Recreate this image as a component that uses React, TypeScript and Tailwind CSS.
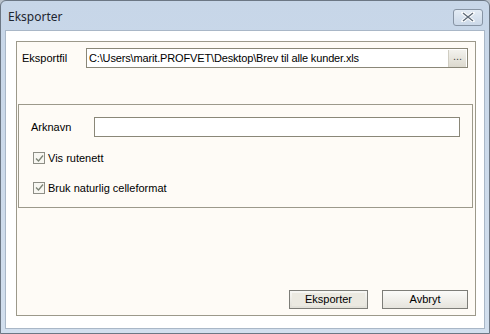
import { ReactNode } from 'react';

function CheckBox({ label }: { label: string }) {
  return (
    <label className="flex items-center gap-[3px]">
      <span className="flex h-[12px] w-[12px] items-center justify-center border border-[#8e8e86] bg-[#f7f6f1]">
        <svg width="9" height="9" viewBox="0 0 9 9">
          <path d="M1 4.5 L3.5 7 L8 1.5" fill="none" stroke="#7b8274" strokeWidth="1.3" />
        </svg>
      </span>
      <span>{label}</span>
    </label>
  );
}

function Button({ children, focused }: { children: ReactNode; focused?: boolean }) {
  return (
    <button
      className={
        focused
          ? 'h-[19px] w-[79px] border border-[#7d7d78] bg-gradient-to-b from-[#f7f7f4] to-[#e2e0d8] p-[2px]'
          : 'h-[19px] w-[86px] border border-[#7d7d78] bg-gradient-to-b from-[#fbfbf9] to-[#e6e4dd]'
      }
    >
      {focused ? (
        <span className="flex h-full w-full items-center justify-center bg-[#ebe9e1]">{children}</span>
      ) : (
        children
      )}
    </button>
  );
}

export default function App() {
  return (
    <div
      className="h-[334px] w-[490px] bg-[#b9c2cc] text-[11px] text-black"
      style={{ fontFamily: '"Liberation Sans", Arial, sans-serif' }}
    >
      <div className="flex h-full flex-col rounded-t-[6px] border border-[#6c7784] bg-gradient-to-b from-[#c7d6e8] to-[#d2dfee]">
        {/* Title bar */}
        <div className="flex h-[29px] items-center justify-between pl-[7px] pr-[6px]">
          <span className="mt-[3px] text-[12px] text-[#1e2630]" style={{ fontFamily: '"Noto Sans", sans-serif' }}>
            Eksporter
          </span>
          <div className="mt-[3px] flex h-[17px] w-[30px] items-center justify-center rounded-[3px] border border-[#8794a4] bg-gradient-to-b from-[#e4ecf5] to-[#cbd8e8]">
            <svg width="14" height="10" viewBox="0 0 14 10">
              <path d="M2 1 L12 9 M12 1 L2 9" stroke="#fff" strokeWidth="3.4" strokeLinecap="round" />
              <path d="M2 1 L12 9 M12 1 L2 9" stroke="#5e6a78" strokeWidth="1.4" />
            </svg>
          </div>
        </div>

        {/* Client area */}
        <div className="mx-[4px] mb-[4px] flex-1 border border-[#a9b7c7] bg-white px-[10px] pt-[10px] pb-[12px]">
          <div className="flex h-[275px] w-[460px] flex-col border border-[#9c998b] bg-[#fefbf6] pl-[5px] pr-[7px] pb-[6px]">
            {/* Export file row */}
            <div className="mt-[6px] flex items-center">
              <span className="w-[64px]">Eksportfil</span>
              <div className="flex h-[20px] w-[382px] items-center border border-[#8a8778] bg-white">
                <span className="flex-1 pl-[2px] tracking-[-0.15px]">
                  C:\Users\marit.PROFVET\Desktop\Brev til alle kunder.xls
                </span>
                <div className="mr-[1px] flex h-[17px] w-[18px] items-center justify-center border-l border-[#d0cdc2] bg-gradient-to-b from-[#f3f2ee] to-[#dcd9ce] pb-[3px] text-[#4b4b4b]">
                  ...
                </div>
              </div>
            </div>

            {/* Group box */}
            <div className="-ml-[4px] mt-[36px] h-[104px] w-[455px] border border-[#9c998b] pl-[12px] pr-[12px] pt-[12px]">
              <div className="flex items-center">
                <span className="w-[63px]">Arknavn</span>
                <div className="h-[20px] w-[366px] border border-[#8a8778] bg-white" />
              </div>
              <div className="mt-[13px] ml-[2px] flex flex-col gap-[13px]">
                <CheckBox label="Vis rutenett" />
                <CheckBox label="Bruk naturlig celleformat" />
              </div>
            </div>

            {/* Buttons */}
            <div className="mt-auto flex justify-end gap-[14px]">
              <Button focused>Eksporter</Button>
              <Button>Avbryt</Button>
            </div>
          </div>
        </div>
      </div>
    </div>
  );
}
